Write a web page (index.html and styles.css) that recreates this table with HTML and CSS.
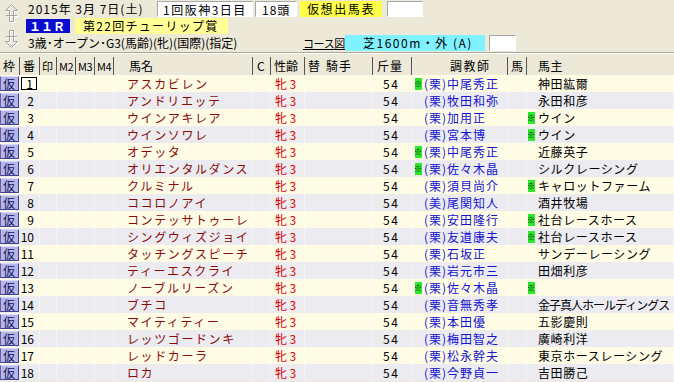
FILE: index.html
```html
<!DOCTYPE html>
<html lang="ja">
<head>
<meta charset="utf-8">
<title>仮想出馬表</title>
<link rel="stylesheet" href="styles.css">
</head>
<body>
<div class="top">
  <div class="nav">
    <div class="navbtn">
      <svg width="20" height="26" viewBox="0 0 20 26">
        <path d="M11.5 4.5 L5.5 10.5 H9.5 V21.5 H13.5 V10.5 H17.5 Z M6 15.5 H17" fill="none" stroke="#fff" transform="translate(1 1)"/>
        <path d="M11.5 4.5 L5.5 10.5 H9.5 V21.5 H13.5 V10.5 H17.5 Z M6 15.5 H17" fill="none" stroke="#a4a4a4"/>
      </svg>
    </div>
    <div class="navbtn">
      <svg width="20" height="26" viewBox="0 0 20 26">
        <path d="M11.5 21.5 L5.5 15.5 H9.5 V4.5 H13.5 V15.5 H17.5 Z M6 10.5 H17" fill="none" stroke="#fff" transform="translate(1 1)"/>
        <path d="M11.5 21.5 L5.5 15.5 H9.5 V4.5 H13.5 V15.5 H17.5 Z M6 10.5 H17" fill="none" stroke="#a4a4a4"/>
      </svg>
    </div>
  </div>
  <div class="info">
    <div class="line l1">
      <span class="date">2015年 3月 7日(土)</span>
      <span class="box sunken kai">1回阪神3日目</span>
      <span class="box sunken heads">18頭</span>
      <span class="box kaso">仮想出馬表</span>
      <span class="box sunken blank1"></span>
    </div>
    <div class="line l2">
      <span class="rbox">１１Ｒ</span>
      <span class="box race">第22回チューリップ賞</span>
    </div>
    <div class="line l3">
      <span class="cond">3歳･オープン･G3(馬齢)(牝)(国際)(指定)</span>
      <span class="course">コース図</span>
      <span class="box cyan">芝1600m・外 (A)</span>
      <span class="box sunken blank2"></span>
    </div>
  </div>
</div>
<div class="sep"></div>
<div class="table">
  <div class="hrow">
    <div class="h">枠</div>
    <div class="h">番</div>
    <div class="h hs">印</div>
    <div class="h hs">M2</div>
    <div class="h hs">M3</div>
    <div class="h hs">M4</div>
    <div class="h hname">馬名</div>
    <div class="h hc">C</div>
    <div class="h">性齢</div>
    <div class="h hjk">替<span class="jk">騎手</span></div>
    <div class="h hwt">斤量</div>
    <div class="h htr">調教師</div>
    <div class="h">馬</div>
    <div class="h how">馬主</div>
  </div>
  <div class="body">
    <div class="row"><div class="c waku"><span class="kari">仮</span></div><div class="c num"><span class="sel">1</span></div><div class="c"></div><div class="c"></div><div class="c"></div><div class="c"></div><div class="c name">アスカビレン</div><div class="c"></div><div class="c sex">牝3</div><div class="c"></div><div class="c wt">54</div><div class="c tr"><i class="mk on">※</i>(栗)中尾秀正</div><div class="c"></div><div class="c ow"><i class="mk"></i>神田紘爾</div></div>
    <div class="row"><div class="c waku"><span class="kari">仮</span></div><div class="c num">2</div><div class="c"></div><div class="c"></div><div class="c"></div><div class="c"></div><div class="c name">アンドリエッテ</div><div class="c"></div><div class="c sex">牝3</div><div class="c"></div><div class="c wt">54</div><div class="c tr"><i class="mk"></i>(栗)牧田和弥</div><div class="c"></div><div class="c ow"><i class="mk"></i>永田和彦</div></div>
    <div class="row"><div class="c waku"><span class="kari">仮</span></div><div class="c num">3</div><div class="c"></div><div class="c"></div><div class="c"></div><div class="c"></div><div class="c name">ウインアキレア</div><div class="c"></div><div class="c sex">牝3</div><div class="c"></div><div class="c wt">54</div><div class="c tr"><i class="mk"></i>(栗)加用正</div><div class="c"></div><div class="c ow"><i class="mk on">※</i>ウイン</div></div>
    <div class="row"><div class="c waku"><span class="kari">仮</span></div><div class="c num">4</div><div class="c"></div><div class="c"></div><div class="c"></div><div class="c"></div><div class="c name">ウインソワレ</div><div class="c"></div><div class="c sex">牝3</div><div class="c"></div><div class="c wt">54</div><div class="c tr"><i class="mk"></i>(栗)宮本博</div><div class="c"></div><div class="c ow"><i class="mk on">※</i>ウイン</div></div>
    <div class="row"><div class="c waku"><span class="kari">仮</span></div><div class="c num">5</div><div class="c"></div><div class="c"></div><div class="c"></div><div class="c"></div><div class="c name">オデッタ</div><div class="c"></div><div class="c sex">牝3</div><div class="c"></div><div class="c wt">54</div><div class="c tr"><i class="mk on">※</i>(栗)中尾秀正</div><div class="c"></div><div class="c ow"><i class="mk"></i>近藤英子</div></div>
    <div class="row"><div class="c waku"><span class="kari">仮</span></div><div class="c num">6</div><div class="c"></div><div class="c"></div><div class="c"></div><div class="c"></div><div class="c name">オリエンタルダンス</div><div class="c"></div><div class="c sex">牝3</div><div class="c"></div><div class="c wt">54</div><div class="c tr"><i class="mk on">※</i>(栗)佐々木晶</div><div class="c"></div><div class="c ow"><i class="mk"></i>シルクレーシング</div></div>
    <div class="row"><div class="c waku"><span class="kari">仮</span></div><div class="c num">7</div><div class="c"></div><div class="c"></div><div class="c"></div><div class="c"></div><div class="c name">クルミナル</div><div class="c"></div><div class="c sex">牝3</div><div class="c"></div><div class="c wt">54</div><div class="c tr"><i class="mk"></i>(栗)須貝尚介</div><div class="c"></div><div class="c ow"><i class="mk on">※</i>キャロットファーム</div></div>
    <div class="row"><div class="c waku"><span class="kari">仮</span></div><div class="c num">8</div><div class="c"></div><div class="c"></div><div class="c"></div><div class="c"></div><div class="c name">ココロノアイ</div><div class="c"></div><div class="c sex">牝3</div><div class="c"></div><div class="c wt">54</div><div class="c tr"><i class="mk"></i>(美)尾関知人</div><div class="c"></div><div class="c ow"><i class="mk"></i>酒井牧場</div></div>
    <div class="row"><div class="c waku"><span class="kari">仮</span></div><div class="c num">9</div><div class="c"></div><div class="c"></div><div class="c"></div><div class="c"></div><div class="c name">コンテッサトゥーレ</div><div class="c"></div><div class="c sex">牝3</div><div class="c"></div><div class="c wt">54</div><div class="c tr"><i class="mk"></i>(栗)安田隆行</div><div class="c"></div><div class="c ow"><i class="mk on">※</i>社台レースホース</div></div>
    <div class="row"><div class="c waku"><span class="kari">仮</span></div><div class="c num">10</div><div class="c"></div><div class="c"></div><div class="c"></div><div class="c"></div><div class="c name">シングウィズジョイ</div><div class="c"></div><div class="c sex">牝3</div><div class="c"></div><div class="c wt">54</div><div class="c tr"><i class="mk"></i>(栗)友道康夫</div><div class="c"></div><div class="c ow"><i class="mk on">※</i>社台レースホース</div></div>
    <div class="row"><div class="c waku"><span class="kari">仮</span></div><div class="c num">11</div><div class="c"></div><div class="c"></div><div class="c"></div><div class="c"></div><div class="c name">タッチングスピーチ</div><div class="c"></div><div class="c sex">牝3</div><div class="c"></div><div class="c wt">54</div><div class="c tr"><i class="mk"></i>(栗)石坂正</div><div class="c"></div><div class="c ow"><i class="mk"></i>サンデーレーシング</div></div>
    <div class="row"><div class="c waku"><span class="kari">仮</span></div><div class="c num">12</div><div class="c"></div><div class="c"></div><div class="c"></div><div class="c"></div><div class="c name">ティーエスクライ</div><div class="c"></div><div class="c sex">牝3</div><div class="c"></div><div class="c wt">54</div><div class="c tr"><i class="mk"></i>(栗)岩元市三</div><div class="c"></div><div class="c ow"><i class="mk"></i>田畑利彦</div></div>
    <div class="row"><div class="c waku"><span class="kari">仮</span></div><div class="c num">13</div><div class="c"></div><div class="c"></div><div class="c"></div><div class="c"></div><div class="c name">ノーブルリーズン</div><div class="c"></div><div class="c sex">牝3</div><div class="c"></div><div class="c wt">54</div><div class="c tr"><i class="mk on">※</i>(栗)佐々木晶</div><div class="c"></div><div class="c ow"><i class="mk on">※</i></div></div>
    <div class="row"><div class="c waku"><span class="kari">仮</span></div><div class="c num">14</div><div class="c"></div><div class="c"></div><div class="c"></div><div class="c"></div><div class="c name">ブチコ</div><div class="c"></div><div class="c sex">牝3</div><div class="c"></div><div class="c wt">54</div><div class="c tr"><i class="mk"></i>(栗)音無秀孝</div><div class="c"></div><div class="c ow tight"><i class="mk"></i>金子真人ホールディングス</div></div>
    <div class="row"><div class="c waku"><span class="kari">仮</span></div><div class="c num">15</div><div class="c"></div><div class="c"></div><div class="c"></div><div class="c"></div><div class="c name">マイティティー</div><div class="c"></div><div class="c sex">牝3</div><div class="c"></div><div class="c wt">54</div><div class="c tr"><i class="mk"></i>(栗)本田優</div><div class="c"></div><div class="c ow"><i class="mk"></i>五影慶則</div></div>
    <div class="row"><div class="c waku"><span class="kari">仮</span></div><div class="c num">16</div><div class="c"></div><div class="c"></div><div class="c"></div><div class="c"></div><div class="c name">レッツゴードンキ</div><div class="c"></div><div class="c sex">牝3</div><div class="c"></div><div class="c wt">54</div><div class="c tr"><i class="mk"></i>(栗)梅田智之</div><div class="c"></div><div class="c ow"><i class="mk"></i>廣崎利洋</div></div>
    <div class="row"><div class="c waku"><span class="kari">仮</span></div><div class="c num">17</div><div class="c"></div><div class="c"></div><div class="c"></div><div class="c"></div><div class="c name">レッドカーラ</div><div class="c"></div><div class="c sex">牝3</div><div class="c"></div><div class="c wt">54</div><div class="c tr"><i class="mk"></i>(栗)松永幹夫</div><div class="c"></div><div class="c ow"><i class="mk"></i>東京ホースレーシング</div></div>
    <div class="row"><div class="c waku"><span class="kari">仮</span></div><div class="c num">18</div><div class="c"></div><div class="c"></div><div class="c"></div><div class="c"></div><div class="c name">ロカ</div><div class="c"></div><div class="c sex">牝3</div><div class="c"></div><div class="c wt">54</div><div class="c tr"><i class="mk"></i>(栗)今野貞一</div><div class="c"></div><div class="c ow"><i class="mk"></i>吉田勝己</div></div>
  </div>
</div>
</body>
</html>
```
FILE: styles.css
```css
* { box-sizing: border-box; margin: 0; padding: 0; }
html, body { width: 674px; height: 382px; overflow: hidden; }
body {
  background: #ece9d8;
  font-family: "Noto Sans CJK JP", "Noto Sans", sans-serif;
  font-size: 12px;
  color: #000;
}

/* ---------- top info area ---------- */
.top { display: flex; height: 52px; }
.nav { width: 20px; display: flex; flex-direction: column; }
.navbtn { height: 26px; display: flex; }
.info { display: flex; flex-direction: column; padding-left: 6px; }
.line { display: flex; align-items: center; white-space: nowrap; }
.l1 { height: 18px; }
.l2 { height: 16px; }
.l3 { height: 18px; }

.box { display: block; height: 16px; line-height: 15px; white-space: nowrap; overflow: hidden; }
.sunken {
  background: #fff;
  border-top: 1px solid #a7a6aa;
  border-left: 1px solid #a7a6aa;
  border-bottom: 1px solid #fff;
  border-right: 1px solid #fff;
}

.date { width: 131px; padding-left: 2px; letter-spacing: 1px; line-height: 16px; }
.kai { width: 96px; padding-left: 5px; letter-spacing: 1.5px; }
.heads { width: 42px; margin-left: 2px; padding-left: 6px; letter-spacing: 1px; }
.kaso { width: 82px; margin-left: 3px; padding-left: 7px; letter-spacing: 1.6px; background: #ffff4a; line-height: 16px; }
.blank1 { width: 36px; margin-left: 5px; }

.rbox {
  display: block;
  width: 44px;
  height: 14px;
  line-height: 14px;
  background: #0c0cd0;
  color: #fff;
  font-weight: bold;
  padding-left: 3px;
  letter-spacing: 0;
}
.race { width: 153px; margin-left: 5px; padding-left: 8px; letter-spacing: 1.3px; background: #ffff96; line-height: 16px; }

.cond { width: 277px; padding-left: 2px; line-height: 16px; letter-spacing: 0; }
.course {
  width: 42px;
  text-decoration: underline;
  font-size: 11px;
  letter-spacing: -0.4px;
  line-height: 16px;
}
.cyan { width: 140px; padding-left: 18px; letter-spacing: 1.5px; background: #80f2ff; line-height: 16px; }
.blank2 { width: 27px; margin-left: 4px; }

.sep {
  height: 2px;
  border-top: 1px solid #aca899;
  border-bottom: 1px solid #fff;
  margin-bottom: 3px;
}

/* ---------- table ---------- */
.hrow, .row {
  display: grid;
  grid-template-columns: 20px 20px 17px 19px 19px 19px 139px 18px 34px 68px 39px 96px 19px 147px;
}
.hrow { height: 18px; }
.h {
  line-height: 18px;
  padding-left: 3px;
  border-right: 1px solid #555;
  white-space: nowrap;
  overflow: hidden;
}
.h:last-child { border-right: none; }
.hs { font-size: 11px; letter-spacing: -0.5px; padding-left: 2px; }
.hname { padding-left: 15px; }
.hc { padding-left: 4px; }
.jk { margin-left: 6px; letter-spacing: 1px; }
.hwt { padding-left: 4px; letter-spacing: 1px; }
.htr { padding-left: 38px; letter-spacing: 1.5px; }
.how { padding-left: 11px; letter-spacing: 0.5px; }

.row { height: 17px; }
.body .row:nth-child(odd) { background: #fffce6; }
.body .row:nth-child(even) { background: #ebebf0; }
.c {
  line-height: 17px;
  white-space: nowrap;
  overflow: hidden;
  border-right: 1px solid rgba(255, 255, 255, 0.45);
}
.waku { padding: 1px 1px 1px 0; border-right: none; }
.kari {
  display: block;
  height: 15px;
  line-height: 13px;
  padding-left: 2px;
  background: #b6b6ea;
  color: #10105a;
  border-top: 1px solid #d8d8ff;
  border-left: 1px solid #6060a8;
  border-right: 1px solid #404090;
  border-bottom: 1px solid #404090;
}
.num { text-align: right; padding-right: 5px; }
.sel {
  display: block;
  margin: 2px 2px 2px 1px;
  height: 13px;
  line-height: 11px;
  border: 1px solid #000;
  padding-right: 3px;
  background: #fffff4;
}
.row:first-child .num { padding: 0; }
.name { padding-left: 13px; color: #8a0a0a; letter-spacing: 1.6px; }
.sex { padding-left: 4px; color: #dd0000; letter-spacing: 2.5px; }
.wt { padding-left: 10px; letter-spacing: 1.5px; }
.tr { padding-left: 3px; color: #1414d2; letter-spacing: 1px; display: flex; align-items: center; }
.ow { padding-left: 1px; letter-spacing: 0.6px; display: flex; align-items: center; }
.ow.tight { letter-spacing: -1px; }
.mk {
  display: inline-block;
  flex: none;
  width: 9px;
  height: 12px;
  font-style: normal;
  font-size: 8px;
  line-height: 12px;
  letter-spacing: 0;
  color: #000;
}
.tr .mk { width: 9px; }
.ow .mk { width: 10px; }
.mk.on { background: linear-gradient(#2ee82e, #2ee82e) no-repeat 0 0 / 7px 12px; text-indent: -1px; }
```
